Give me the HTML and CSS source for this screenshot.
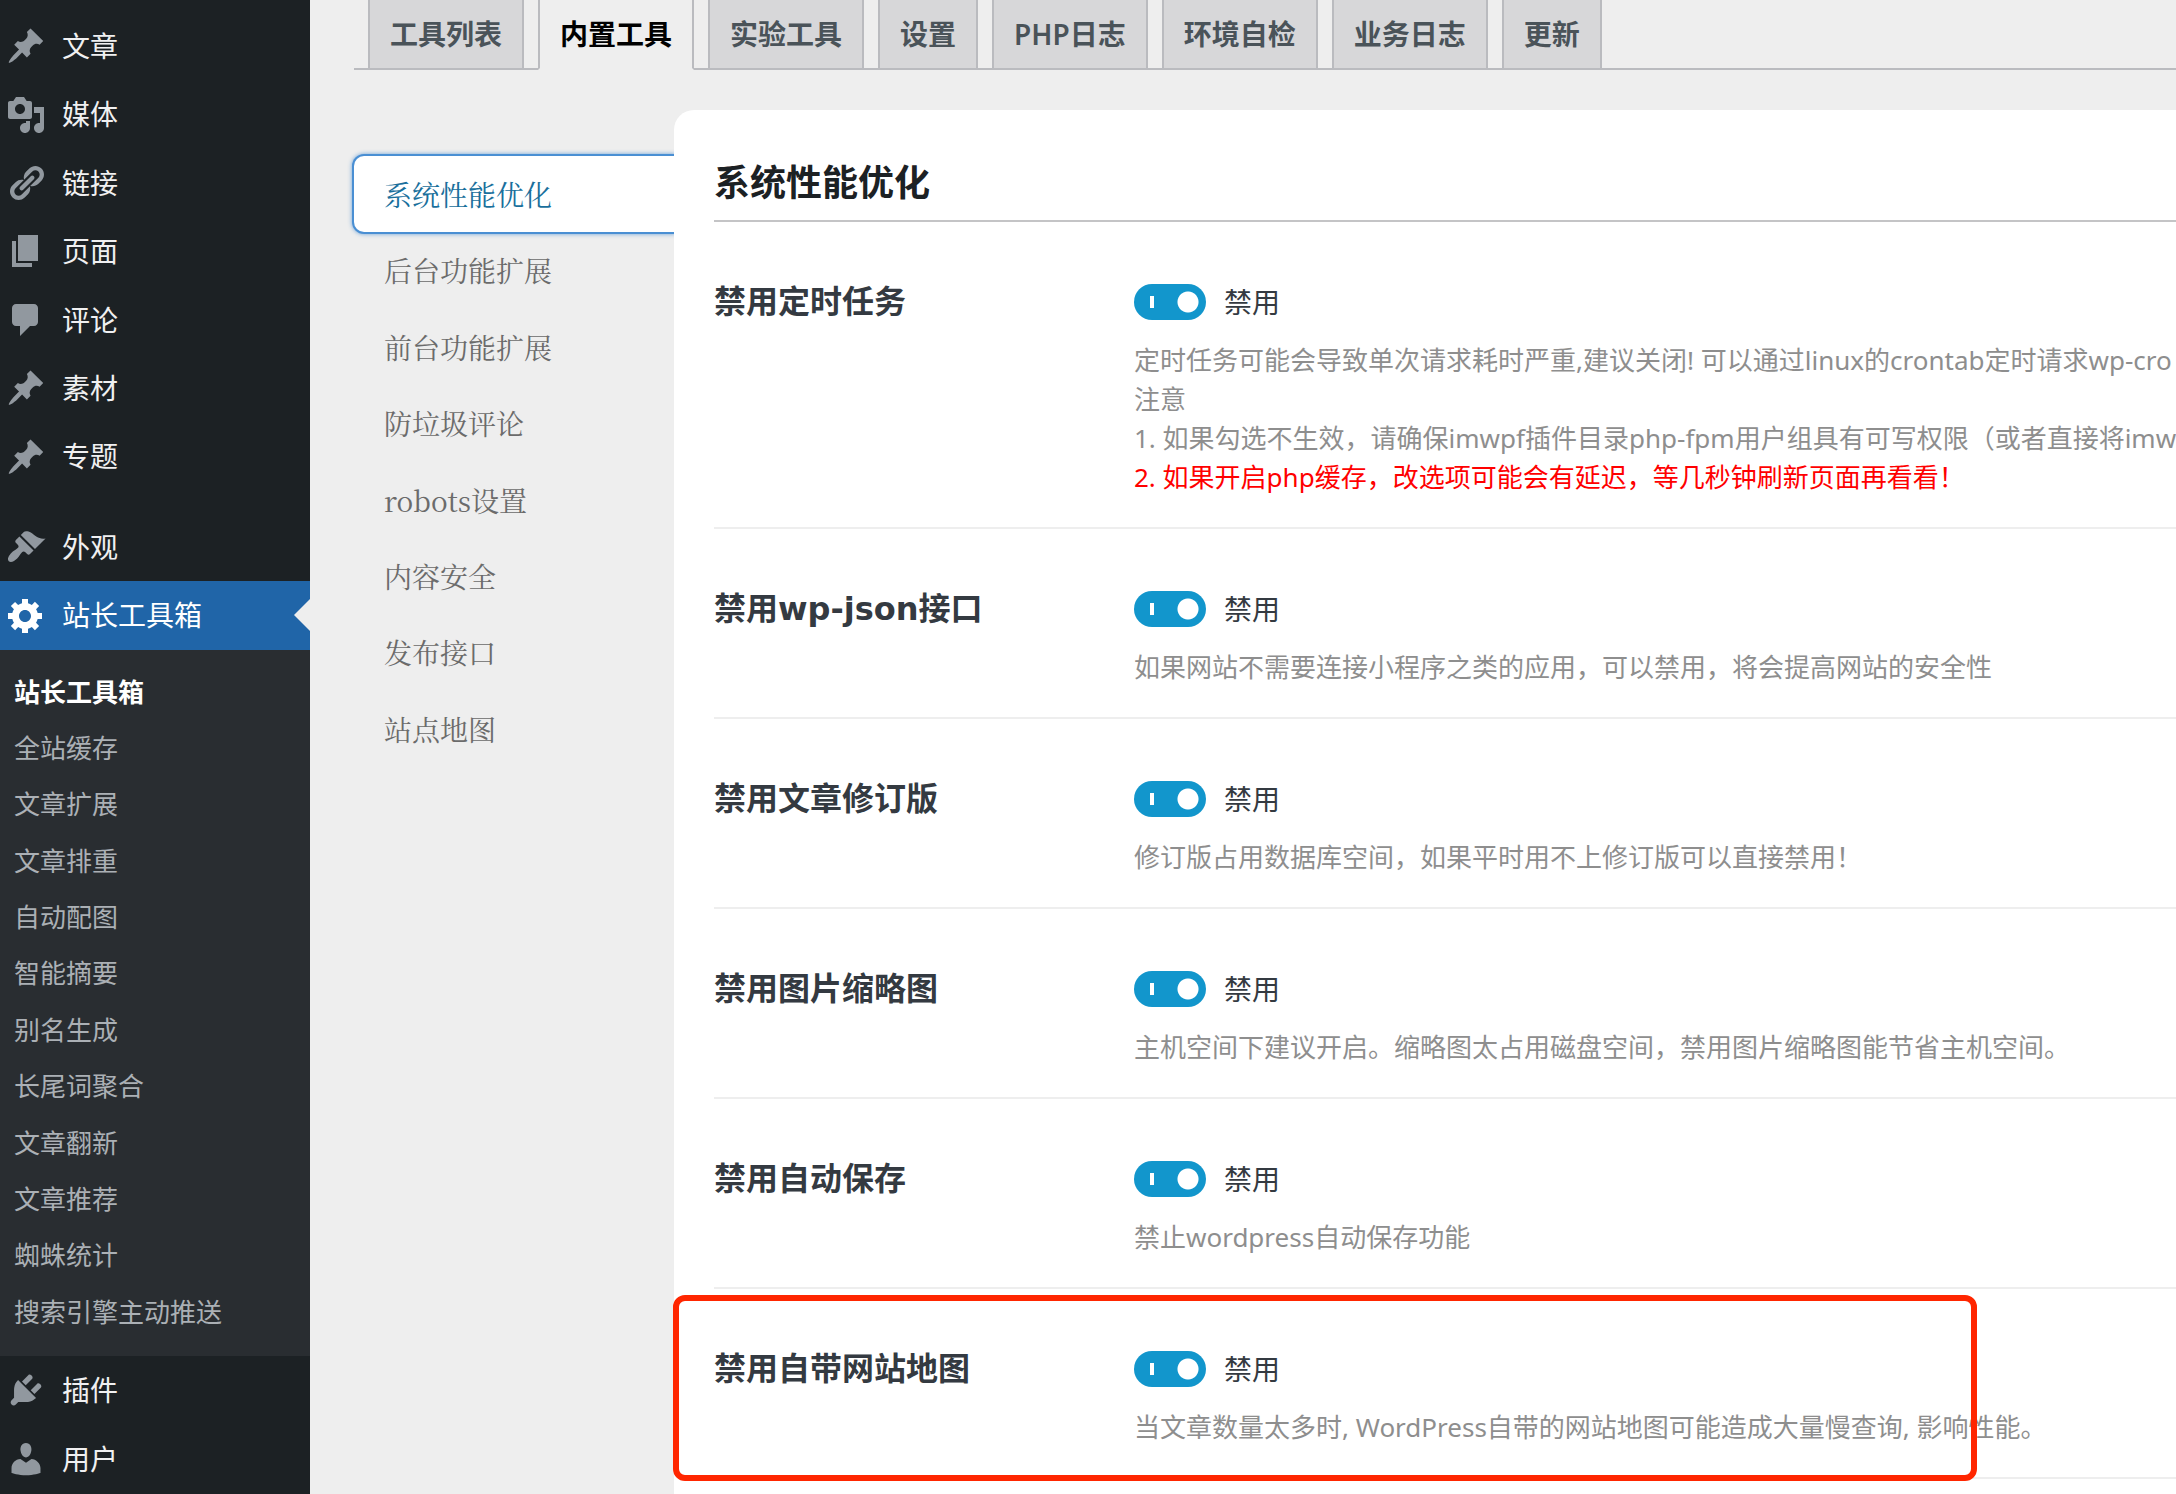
FILE: index.html
```html
<!DOCTYPE html>
<html lang="zh-CN">
<head>
<meta charset="utf-8">
<meta name="viewport" content="width=device-width, initial-scale=1">
<title>站长工具箱</title>
<link rel="stylesheet" href="styles.css">
</head>
<body>
<svg class="sprite" aria-hidden="true">
  <symbol id="icon-post" viewBox="0 0 20 20"><path d="M10.44 3.02l1.82-1.82 6.36 6.35-1.83 1.82c-1.05-.68-2.48-.57-3.41.36l-.75.75c-.92.93-1.04 2.35-.35 3.41l-1.83 1.82-2.41-2.41-2.8 2.79c-.42.42-3.38 2.71-3.8 2.29s1.86-3.39 2.28-3.81l2.79-2.79L4.1 9.36l1.83-1.82c1.05.69 2.48.57 3.4-.36l.75-.75c.93-.92 1.05-2.35.36-3.41z"/></symbol>
  <symbol id="icon-media" viewBox="0 0 20 20"><path d="M13 11V4c0-.55-.45-1-1-1h-1.67L9 1H5L3.67 3H2c-.55 0-1 .45-1 1v7c0 .55.45 1 1 1h10c.55 0 1-.45 1-1zM7 4.5c1.38 0 2.5 1.12 2.5 2.5S8.38 9.5 7 9.5 4.5 8.38 4.5 7 5.62 4.5 7 4.5zM14 6h5v10.5c0 1.38-1.12 2.5-2.5 2.5S14 17.88 14 16.5s1.12-2.5 2.5-2.5c.17 0 .34.02.5.05V9h-3V6zm-4 8.05V13h2v3.5c0 1.38-1.12 2.5-2.5 2.5S7 17.88 7 16.5 8.12 14 9.5 14c.17 0 .34.02.5.05z"/></symbol>
  <symbol id="icon-link" viewBox="0 0 20 20"><path d="M17.74 2.76c1.68 1.69 1.68 4.41 0 6.1l-1.53 1.52c-1.12 1.12-2.7 1.47-4.14 1.09l2.62-2.61.76-.77.76-.76c.84-.84.84-2.2 0-3.04-.84-.85-2.2-.85-3.04 0l-.77.76-3.38 3.38c-.37-1.44-.02-3.02 1.1-4.14l1.52-1.53c1.69-1.68 4.42-1.68 6.1 0zM8.59 13.43l5.34-5.34c.42-.42.42-1.1 0-1.52-.44-.43-1.13-.39-1.53 0l-5.33 5.34c-.42.42-.42 1.1 0 1.52.44.43 1.13.39 1.52 0zm-.76 2.29l4.14-4.15c.38 1.44.03 3.02-1.09 4.14l-1.52 1.53c-1.69 1.68-4.41 1.68-6.1 0-1.68-1.68-1.68-4.42 0-6.1l1.53-1.52c1.12-1.12 2.7-1.47 4.14-1.1l-4.14 4.15c-.85.84-.85 2.2 0 3.05.84.84 2.2.84 3.04 0z"/></symbol>
  <symbol id="icon-page" viewBox="0 0 20 20"><path d="M6 15V2h10v13H6zm-1 1h8v2H3V5h2v11z"/></symbol>
  <symbol id="icon-comment" viewBox="0 0 20 20"><path d="M5 2h9c1.1 0 2 .9 2 2v7c0 1.1-.9 2-2 2h-2l-5 5v-5H5c-1.1 0-2-.9-2-2V4c0-1.1.9-2 2-2z"/></symbol>
  <symbol id="icon-brush" viewBox="0 0 20 20"><path d="M14.48 11.06L7.41 3.99l1.5-1.5c.5-.56 2.3-.47 3.51.32 1.21.8 1.43 1.28 2.91 2.1 1.18.64 2.45 1.26 4.45.85zm-.71.71L6.7 4.7 4.93 6.47c-.39.39-.39 1.02 0 1.41l1.06 1.06c.39.39.39 1.03 0 1.42-.6.6-1.43 1.11-2.21 1.69-.35.26-.7.53-1.01.84C1.43 14.23.4 16.08 1.4 17.07c.99 1 2.84-.03 4.18-1.36.31-.31.58-.66.85-1.02.57-.78 1.08-1.61 1.69-2.21.39-.39 1.02-.39 1.41 0l1.06 1.06c.39.39 1.02.39 1.41 0z"/></symbol>
  <symbol id="icon-gear" viewBox="0 0 20 20"><path d="M18 12h-2.18c-.17.7-.44 1.35-.81 1.93l1.54 1.54-2.1 2.1-1.54-1.54c-.58.36-1.23.63-1.91.79V19H8v-2.18c-.68-.16-1.33-.43-1.91-.79l-1.54 1.54-2.12-2.12 1.54-1.54c-.36-.58-.63-1.23-.79-1.91H1V9.03h2.17c.16-.7.44-1.35.8-1.94L2.43 5.55l2.1-2.1 1.54 1.54c.58-.37 1.24-.64 1.93-.81V2h3v2.18c.68.16 1.33.43 1.91.79l1.54-1.54 2.12 2.12-1.54 1.54c.36.59.64 1.24.8 1.94H18V12zm-8.5 1.5c1.66 0 3-1.34 3-3s-1.34-3-3-3-3 1.34-3 3 1.34 3 3 3z"/></symbol>
  <symbol id="icon-plug" viewBox="0 0 20 20"><path d="M13.11 4.36L9.87 7.6 8 5.73l3.24-3.24c.35-.34 1.05-.2 1.56.32.52.51.66 1.21.31 1.55zm-8 1.77l.91-1.12 9.01 9.01-1.19.84c-.71.71-2.63 1.16-3.82 1.16H6.14L4.9 17.26c-.59.59-1.54.59-2.12 0-.59-.58-.59-1.53 0-2.12l1.24-1.24v-3.88c0-1.13.4-3.19 1.09-3.89zm7.26 3.97l3.24-3.24c.34-.35 1.04-.21 1.55.31.52.51.66 1.21.31 1.55l-3.24 3.25z"/></symbol>
  <symbol id="icon-user" viewBox="0 0 20 20"><path d="M10 9.25c-2.27 0-2.73-3.44-2.73-3.44C7 4.02 7.82 2 9.97 2c2.16 0 2.98 2.02 2.71 3.81 0 0-.41 3.44-2.68 3.44zm0 2.57L12.72 10c2.39 0 4.52 2.33 4.52 4.53v2.49s-3.65 1.13-7.24 1.13c-3.65 0-7.24-1.13-7.24-1.13v-2.49c0-2.25 1.94-4.48 4.47-4.48z"/></symbol>
</svg>

<div class="layout">
  <nav class="sidebar" aria-label="主菜单">
    <ul class="menu">
      <li><a class="menu-link" href="#"><svg class="icon"><use href="#icon-post"/></svg>文章</a></li>
      <li><a class="menu-link" href="#"><svg class="icon"><use href="#icon-media"/></svg>媒体</a></li>
      <li><a class="menu-link" href="#"><svg class="icon"><use href="#icon-link"/></svg>链接</a></li>
      <li><a class="menu-link" href="#"><svg class="icon"><use href="#icon-page"/></svg>页面</a></li>
      <li><a class="menu-link" href="#"><svg class="icon"><use href="#icon-comment"/></svg>评论</a></li>
      <li><a class="menu-link" href="#"><svg class="icon"><use href="#icon-post"/></svg>素材</a></li>
      <li><a class="menu-link" href="#"><svg class="icon"><use href="#icon-post"/></svg>专题</a></li>
      <li class="menu-separator"></li>
      <li><a class="menu-link" href="#"><svg class="icon"><use href="#icon-brush"/></svg>外观</a></li>
      <li>
        <a class="menu-link menu-link-current" href="#"><svg class="icon"><use href="#icon-gear"/></svg>站长工具箱</a>
        <ul class="submenu">
          <li><a class="submenu-link submenu-link-current" href="#">站长工具箱</a></li>
          <li><a class="submenu-link" href="#">全站缓存</a></li>
          <li><a class="submenu-link" href="#">文章扩展</a></li>
          <li><a class="submenu-link" href="#">文章排重</a></li>
          <li><a class="submenu-link" href="#">自动配图</a></li>
          <li><a class="submenu-link" href="#">智能摘要</a></li>
          <li><a class="submenu-link" href="#">别名生成</a></li>
          <li><a class="submenu-link" href="#">长尾词聚合</a></li>
          <li><a class="submenu-link" href="#">文章翻新</a></li>
          <li><a class="submenu-link" href="#">文章推荐</a></li>
          <li><a class="submenu-link" href="#">蜘蛛统计</a></li>
          <li><a class="submenu-link" href="#">搜索引擎主动推送</a></li>
        </ul>
      </li>
      <li><a class="menu-link" href="#"><svg class="icon"><use href="#icon-plug"/></svg>插件</a></li>
      <li><a class="menu-link" href="#"><svg class="icon"><use href="#icon-user"/></svg>用户</a></li>
    </ul>
  </nav>

  <main class="content">
    <nav class="tabs" aria-label="工具分类">
      <a class="tab" href="#">工具列表</a>
      <a class="tab tab-active" href="#">内置工具</a>
      <a class="tab" href="#">实验工具</a>
      <a class="tab" href="#">设置</a>
      <a class="tab" href="#">PHP日志</a>
      <a class="tab" href="#">环境自检</a>
      <a class="tab" href="#">业务日志</a>
      <a class="tab" href="#">更新</a>
    </nav>

    <div class="workspace">
      <nav class="sections" aria-label="内置工具">
        <a class="section-link section-link-active" href="#">系统性能优化</a>
        <a class="section-link" href="#">后台功能扩展</a>
        <a class="section-link" href="#">前台功能扩展</a>
        <a class="section-link" href="#">防垃圾评论</a>
        <a class="section-link" href="#">robots设置</a>
        <a class="section-link" href="#">内容安全</a>
        <a class="section-link" href="#">发布接口</a>
        <a class="section-link" href="#">站点地图</a>
      </nav>

      <form class="panel">
        <h2 class="panel-title">系统性能优化</h2>

        <section class="option">
          <h3 class="option-name">禁用定时任务</h3>
          <div class="option-body">
            <label class="switch"><input class="toggle" type="checkbox" checked>禁用</label>
            <p class="hint">定时任务可能会导致单次请求耗时严重,建议关闭! 可以通过linux的crontab定时请求wp-cro<br>注意<br>1. 如果勾选不生效，请确保imwpf插件目录php-fpm用户组具有可写权限（或者直接将imw<br><span class="hint-warning">2. 如果开启php缓存，改选项可能会有延迟，等几秒钟刷新页面再看看！</span></p>
          </div>
        </section>

        <section class="option">
          <h3 class="option-name">禁用wp-json接口</h3>
          <div class="option-body">
            <label class="switch"><input class="toggle" type="checkbox" checked>禁用</label>
            <p class="hint">如果网站不需要连接小程序之类的应用，可以禁用，将会提高网站的安全性</p>
          </div>
        </section>

        <section class="option">
          <h3 class="option-name">禁用文章修订版</h3>
          <div class="option-body">
            <label class="switch"><input class="toggle" type="checkbox" checked>禁用</label>
            <p class="hint">修订版占用数据库空间，如果平时用不上修订版可以直接禁用！</p>
          </div>
        </section>

        <section class="option">
          <h3 class="option-name">禁用图片缩略图</h3>
          <div class="option-body">
            <label class="switch"><input class="toggle" type="checkbox" checked>禁用</label>
            <p class="hint">主机空间下建议开启。缩略图太占用磁盘空间，禁用图片缩略图能节省主机空间。</p>
          </div>
        </section>

        <section class="option">
          <h3 class="option-name">禁用自动保存</h3>
          <div class="option-body">
            <label class="switch"><input class="toggle" type="checkbox" checked>禁用</label>
            <p class="hint">禁止wordpress自动保存功能</p>
          </div>
        </section>

        <section class="option option-marked">
          <h3 class="option-name">禁用自带网站地图</h3>
          <div class="option-body">
            <label class="switch"><input class="toggle" type="checkbox" checked>禁用</label>
            <p class="hint">当文章数量太多时, WordPress自带的网站地图可能造成大量慢查询, 影响性能。</p>
          </div>
        </section>
      </form>
    </div>
  </main>
</div>
</body>
</html>
```

FILE: styles.css
```css
*,
*::before,
*::after {
  box-sizing: border-box;
}

body {
  margin: 0;
  background: #eee;
  color: #343a41;
  font: 28px/1.3 "Noto Sans", "Noto Sans CJK SC", sans-serif;
}

a {
  color: inherit;
  text-decoration: none;
}

ul {
  margin: 0;
  padding: 0;
  list-style: none;
}

.sprite {
  display: none;
}

.layout {
  display: flex;
  min-height: 100vh;
  overflow: hidden;
}

/* Sidebar */

.sidebar {
  flex: 0 0 310px;
  padding-top: 12px;
  background: #1c2124;
  color: #f0f0f1;
}

.menu-link {
  display: flex;
  align-items: center;
  gap: 16px;
  padding: 16px 6px;
}

.icon {
  width: 40px;
  height: 40px;
  margin: -4px 0;
  fill: #91989f;
}

.menu-separator {
  height: 22px;
}

.menu-link-current {
  position: relative;
  background: #2065a8;
  color: #fff;
}

.menu-link-current .icon {
  fill: #fff;
}

.menu-link-current::after {
  content: "";
  position: absolute;
  top: 18px;
  right: 0;
  border: 16px solid transparent;
  border-left-width: 0;
  border-right-color: #eee;
}

.submenu {
  padding: 14px 0 16px;
  background: #292d31;
  color: #abb0b5;
  font-size: 26px;
  line-height: 1.4;
}

.submenu-link {
  display: block;
  padding: 10px 14px;
}

.submenu-link-current {
  color: #fff;
  font-weight: 600;
}

/* Top tabs */

.content {
  flex: 1;
  min-width: 0;
  padding-left: 44px;
}

.tabs {
  display: flex;
  gap: 14px;
  padding-left: 14px;
  border-bottom: 2px solid #babbbf;
}

.tab {
  padding: 10px 20px;
  border: 2px solid #babbbf;
  border-width: 0 2px;
  background: #d7d7d9;
  color: #4a5359;
  font-weight: 600;
  line-height: 48px;
  white-space: nowrap;
}

.tab-active {
  margin-bottom: -2px;
  border-bottom: 2px solid #eee;
  background: #eee;
  color: #000;
}

/* Section list and settings panel */

.workspace {
  display: flex;
  align-items: stretch;
  padding-top: 40px;
}

.sections {
  flex: 0 0 320px;
  padding-top: 46px;
  color: #6b6b6b;
  font-family: "Noto Serif CJK SC", "Liberation Serif", "Noto Sans CJK SC", serif;
}

.section-link {
  display: block;
  padding: 20px 30px;
}

.section-link-active {
  border-radius: 10px 0 0 10px;
  background: #fff;
  color: #196f9c;
  box-shadow: 0 0 0 2px #4a8fd3, 0 0 4px 2px rgba(74, 143, 211, .8);
}

.panel {
  flex: 1;
  min-width: 0;
  padding: 40px 0 16px 40px;
  border-radius: 20px 0 0 0;
  background: #fff;
}

.panel-title {
  margin: 0;
  padding: 9px 0 13px;
  border-bottom: 2px solid #c4c4c6;
  color: #1c2124;
  font-size: 36px;
  font-weight: 600;
  line-height: 48px;
}

.option {
  display: grid;
  grid-template-columns: 420px 1fr;
  padding: 62px 0 30px;
  border-bottom: 2px solid #eee;
}

.option-name {
  margin: 0;
  font-family: "DejaVu Sans", "Noto Sans CJK SC", sans-serif;
  font-size: 32px;
  font-weight: 600;
  line-height: 36px;
}

.switch {
  display: flex;
  align-items: center;
  gap: 18px;
  width: fit-content;
  height: 36px;
}

/* The "on" mark is a short bar at the left, the knob a disc at the right. */
.toggle {
  appearance: none;
  width: 72px;
  height: 36px;
  margin: 0;
  border-radius: 18px;
  background:
    linear-gradient(#fff, #fff) 16px 12px / 4px 12px no-repeat,
    radial-gradient(circle at 54px 18px, #fff 10px, transparent 11px),
    #1296cc;
}

.hint {
  margin: 21px 0 0;
  color: #8e8e8e;
  font-size: 26px;
  line-height: 39px;
  white-space: nowrap;
}

.hint-warning {
  color: #f00;
}

/* Red frame drawn over the option */
.option-marked {
  position: relative;
}

.option-marked::after {
  content: "";
  position: absolute;
  top: 6px;
  left: -41px;
  width: 1304px;
  height: 186px;
  border: 6px solid #ff2600;
  border-radius: 12px;
  pointer-events: none;
}
```
